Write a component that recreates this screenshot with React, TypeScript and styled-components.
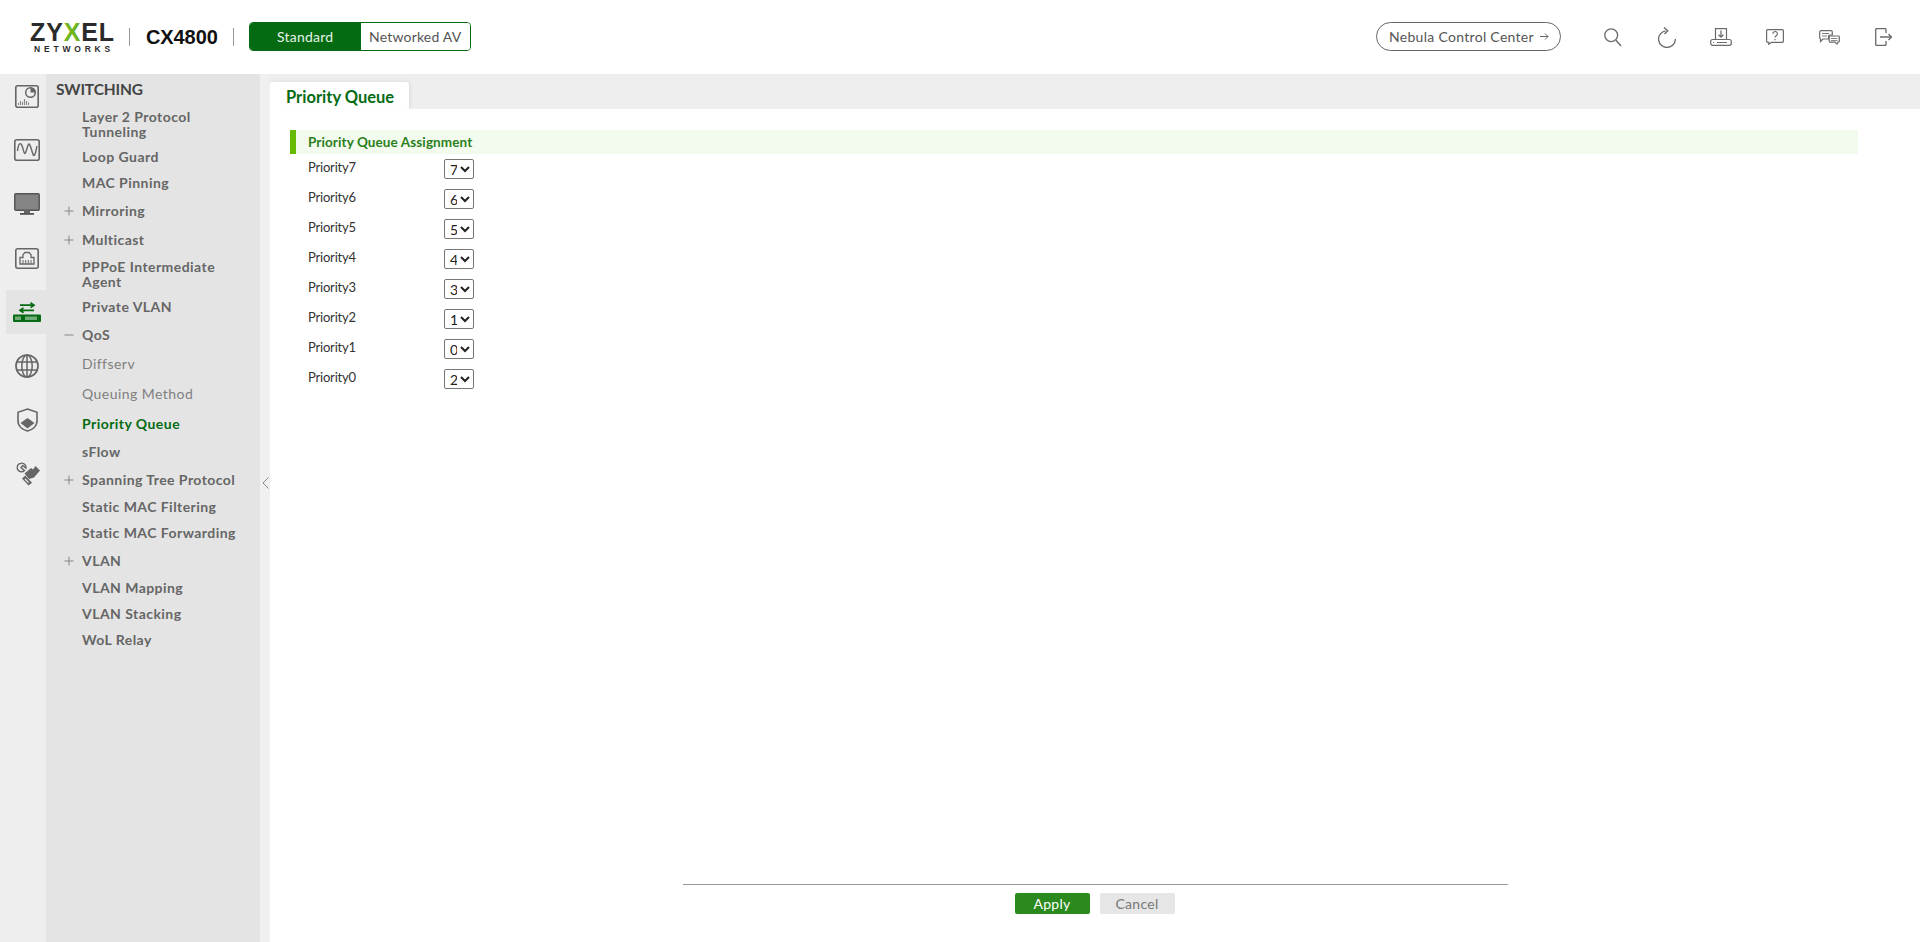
import React from "react";
import styled, { createGlobalStyle } from "styled-components";

const Global = createGlobalStyle`
  html, body { margin: 0; padding: 0; height: 100%; background: #fff; overflow: hidden; }
  #root { height: 100%; }
  * { box-sizing: border-box; }
`;
const FONT = `"Lato", "Liberation Sans", sans-serif`;

const Page = styled.div`
  width: 1920px; height: 942px; display: flex; flex-direction: column;
  font-family: ${FONT}; color: #333;
`;
const Header = styled.header`
  height: 74px; flex: none; display: flex; align-items: center; background: #fff;
  padding: 0 10px 0 31px;
`;
const Logo = styled.div`
  width: 82px; display: flex; flex-direction: column; align-items: center; gap: 2px; color: #2b2b2b;
  font-family: "Liberation Sans", sans-serif;
`;
const LogoMain = styled.div`
  font-size: 25px; line-height: 22px; font-weight: 700; letter-spacing: 0.85px; margin-right: -1px; white-space: nowrap;
  span { color: #6fb51e; }
`;
const LogoSub = styled.div`
  font-size: 8.5px; line-height: 8px; font-weight: 700; letter-spacing: 3.8px; margin-right: -4px;
`;
const Divider = styled.div`
  width: 1px; height: 18px; background: #999; flex: none;
`;
const LogoDivider = styled(Divider)`
  margin-left: 16px;
`;
const Model = styled.div`
  font-family: "Liberation Sans", sans-serif; font-size: 20px; font-weight: 700; color: #111;
  margin: 0 15px 0 16px; letter-spacing: -0.1px;
`;
const Toggle = styled.div`
  display: flex; height: 29px; width: 222px; border: 1px solid #056b12; border-radius: 4px;
  overflow: hidden; margin: 0 0 2px 15px;
`;
const ToggleItem = styled.div<{ $on?: boolean }>`
  display: flex; align-items: center; justify-content: center; font-size: 14px;
  letter-spacing: 0.2px;
  width: ${(p) => (p.$on ? "111px" : "109px")};
  background: ${(p) => (p.$on ? "#056b12" : "#fff")};
  color: ${(p) => (p.$on ? "#e6f3e6" : "#555")};
`;
const HeaderRight = styled.div`
  margin-left: auto; display: flex; align-items: center;
`;
const Nebula = styled.div`
  width: 185px; height: 29px; border: 1px solid #666; border-radius: 15px; display: flex; align-items: center;
  padding-left: 12px; gap: 6px; font-size: 14px; letter-spacing: 0.3px; color: #555; margin: 0 25px 2px 0; white-space: nowrap;
`;
const TopIcon = styled.div`
  width: 54px; height: 30px; display: flex; align-items: center; justify-content: center; color: #6b6b6b;
`;
const Body = styled.div`
  flex: 1; display: flex; min-height: 0;
`;
const Rail = styled.nav`
  width: 46px; flex: none; background: #eeeeef; display: flex; flex-direction: column; gap: 10px;
`;
const RailItem = styled.div<{ $on?: boolean }>`
  width: 40px; margin-left: 6px; padding-left: 2px; height: 44px; flex: none;
  display: flex; align-items: center; justify-content: center;
  background: ${(p) => (p.$on ? "#e4e4e4" : "transparent")};
  color: #666;
`;
const Side = styled.aside`
  width: 214px; flex: none; background: #e4e4e4; padding: 5px 0 0 10px; color: #666;
`;
const SideTitle = styled.div`
  font-size: 15.5px; line-height: 20px; font-weight: 700; color: #444; letter-spacing: -0.15px;
`;
const MenuRow = styled.div<{ $gap: number }>`
  margin-top: ${(p) => p.$gap}px; display: flex; align-items: center; position: relative; padding-left: 26px;
`;
const MenuText = styled.span<{ $kind?: "sub" | "active" }>`
  font-size: 14px; line-height: 15px; letter-spacing: 0.45px;
  font-weight: ${(p) => (p.$kind === "sub" ? 400 : 700)};
  color: ${(p) => (p.$kind === "active" ? "#056b12" : p.$kind === "sub" ? "#808080" : "#666")};
  white-space: pre-line;
`;
const Expander = styled.span`
  position: absolute; left: 8px; top: 50%; transform: translateY(-50%); width: 10px; height: 10px; color: #888;
  display: flex;
`;
const Gutter = styled.div`
  width: 10px; flex: none; background: #f0f0f0; position: relative;
`;
const Collapse = styled.div`
  position: absolute; left: 0; top: 399px; width: 10px; height: 20px; display: flex; align-items: center; justify-content: center; color: #888;
`;
const Main = styled.main`
  flex: 1; min-width: 0; display: flex; flex-direction: column; background: #fff; position: relative;
`;
const TabBar = styled.div`
  height: 35px; flex: none; background: #eeeeee; padding-top: 8px; display: flex;
`;
const Tab = styled.div`
  width: 139px; height: 27px; background: #fff; border-radius: 3px 3px 0 0; box-shadow: 2px -1px 3px rgba(0,0,0,.06);
  font-size: 16.5px; font-weight: 700; color: #056b12; padding-left: 16px; line-height: 30px;
`;
const Content = styled.div`
  flex: 1; display: flex; flex-direction: column; padding: 21px 62px 0 20px;
`;
const Section = styled.div`
  height: 24px; flex: none; background: #f3fbee; border-left: 6px solid #66bb00; padding-left: 12px;
  font-size: 13.5px; line-height: 25px; font-weight: 700; color: #2a8020; letter-spacing: 0.1px;
`;
const Fields = styled.div`
  display: flex; flex-direction: column; padding-left: 18px;
`;
const Field = styled.label`
  height: 30px; flex: none; display: flex; align-items: flex-start;
`;
const FieldLabel = styled.span`
  width: 136px; font-size: 13px; line-height: 16px; color: #333; margin-top: 5px; letter-spacing: -0.2px;
`;
const Select = styled.select`
  width: 30px; height: 20px; margin: 5px 0 0 0; padding: 0 0 0 1px; font-size: 14px; font-family: ${FONT};
  border: 1px solid #767676; border-radius: 2px; background: #fff; color: #222;
`;
const Footer = styled.div`
  position: absolute; left: 413px; top: 810px; width: 825px; border-top: 1px solid #999;
  display: flex; justify-content: center; gap: 10px; padding: 8px 2px 0 0;
`;
const Btn = styled.button<{ $primary?: boolean }>`
  width: 75px; height: 21px; border: 0; border-radius: 2px; padding: 0; font-family: ${FONT}; font-size: 14px;
  background: ${(p) => (p.$primary ? "#2b8a1e" : "#e6e6e6")}; color: ${(p) => (p.$primary ? "#fff" : "#777")};
  letter-spacing: 0.3px;
`;

const Plus = () => (
  <svg width="10" height="10" viewBox="0 0 10 10"><path d="M5 .5v9M.5 5h9" stroke="currentColor" strokeWidth="1" /></svg>
);
const Minus = () => (
  <svg width="10" height="10" viewBox="0 0 10 10"><path d="M.5 5h9" stroke="currentColor" strokeWidth="1" /></svg>
);

const S = { fill: "none", stroke: "currentColor" } as const;
const RailIcons = [
  <svg key="a" width="24" height="23" viewBox="0 0 24 23">
    <rect x=".8" y=".8" width="22.400" height="21.400" rx="2" {...S} strokeWidth="1.6" />
    <circle cx="15.500" cy="7.500" r="4.800" {...S} strokeWidth="1.5" />
    <path d="M15.500 7.500V2.700A4.800 4.800 0 0 1 20.300 7.500Z" fill="currentColor" />
    <path d="M3.500 20v-2M5.500 20v-4M7.500 20v-3M9.500 20v-6M11.500 20v-4M13.500 20v-2.500" {...S} strokeWidth="1.1" opacity=".75" />
  </svg>,
  <svg key="b" width="26" height="22" viewBox="0 0 26 22">
    <rect x=".8" y=".8" width="24.400" height="20.400" rx="2" {...S} strokeWidth="1.6" />
    <path d="M3.500 12C4.500 3 7 3 8.500 8S10.500 18 12.500 11 15 3 17 9 19.500 19 21 15 22.500 8 23 7" {...S} strokeWidth="1.4" />
  </svg>,
  <svg key="c" width="26" height="22" viewBox="0 0 26 22">
    <rect x=".8" y=".8" width="24.400" height="16.400" rx="1" fill="#858585" stroke="#555" strokeWidth="1.500" />
    <rect x="10" y="17" width="6" height="3" fill="#666" />
    <rect x="6" y="20" width="14" height="1.800" fill="#555" />
  </svg>,
  <svg key="d" width="24" height="21" viewBox="0 0 24 21">
    <rect x=".8" y=".8" width="22.400" height="19.400" rx="2" {...S} strokeWidth="1.6" />
    <path d="M5 16V9.500h3V6.500l2-2h4l2 2v3h3V16Z" {...S} strokeWidth="1.3" />
    <path d="M8 15.500v-3.500M10.700 15.500v-3.500M13.300 15.500v-3.500M16 15.500v-3.500" {...S} strokeWidth="1" />
  </svg>,
];
const RailIcons2 = [
  <svg key="e" width="24" height="24" viewBox="0 0 24 24">
    <circle cx="12" cy="12" r="11" {...S} strokeWidth="1.700" />
    <ellipse cx="12" cy="12" rx="5.200" ry="11" {...S} strokeWidth="1.500" />
    <path d="M12 1v22M1.800 8h20.400M1.800 16h20.400" {...S} strokeWidth="1.500" />
  </svg>,
  <svg key="f" width="21" height="24" viewBox="0 0 21 24">
    <path d="M10.500 1 L20 4.200 V13 C20 18.500 15 21.800 10.500 23 C6 21.800 1 18.500 1 13 V4.200 Z" {...S} strokeWidth="1.600" />
    <path d="M3.500 15 L10.500 10 L17.500 15 L10.500 20.500Z" fill="currentColor" />
  </svg>,
  <svg key="g" width="25" height="24" viewBox="0 0 25 24">
    <path d="M6 1.200A4.300 4.300 0 1 0 9.500 8.500L6 5.600 7.700 3.500l3.300 2.800A4.300 4.300 0 0 0 6 1.200Z" {...S} strokeWidth="1.400" />
    <path d="M9.500 11.500 L16 6 L18 7.500 L20.500 4 L25 8.500 L19 15.500 L14 17Z" fill="currentColor" />
    <path d="M7 16.500 L13.500 23.500 L17 20.800 L10.200 13.500Z" fill="currentColor" />
    <path d="M10 17l3.500 3.500" stroke="#eeeeef" strokeWidth="1.100" />
  </svg>,
];

const menu: { t: string; gap: number; e?: "+" | "-"; k?: "sub" | "active" }[] = [
  { t: "Layer 2 Protocol\nTunneling", gap: 10 },
  { t: "Loop Guard", gap: 10 },
  { t: "MAC Pinning", gap: 11 },
  { t: "Mirroring", gap: 13, e: "+" },
  { t: "Multicast", gap: 14, e: "+" },
  { t: "PPPoE Intermediate\nAgent", gap: 12 },
  { t: "Private VLAN", gap: 10 },
  { t: "QoS", gap: 13, e: "-" },
  { t: "Diffserv", gap: 14, k: "sub" },
  { t: "Queuing Method", gap: 15, k: "sub" },
  { t: "Priority Queue", gap: 15, k: "active" },
  { t: "sFlow", gap: 13 },
  { t: "Spanning Tree Protocol", gap: 13, e: "+" },
  { t: "Static MAC Filtering", gap: 12 },
  { t: "Static MAC Forwarding", gap: 11 },
  { t: "VLAN", gap: 13, e: "+" },
  { t: "VLAN Mapping", gap: 12 },
  { t: "VLAN Stacking", gap: 11 },
  { t: "WoL Relay", gap: 11 },
];

const prios: [string, string][] = [["7","7"],["6","6"],["5","5"],["4","4"],["3","3"],["2","1"],["1","0"],["0","2"]];

export default function App() {
  return (
    <Page>
      <Global />
      <Header>
        <Logo>
          <LogoMain>ZY<span>X</span>EL</LogoMain>
          <LogoSub>NETWORKS</LogoSub>
        </Logo>
        <LogoDivider />
        <Model>CX4800</Model>
        <Divider />
        <Toggle>
          <ToggleItem $on>Standard</ToggleItem>
          <ToggleItem>Networked AV</ToggleItem>
        </Toggle>
        <HeaderRight>
          <Nebula>
            Nebula Control Center
            <svg width="9" height="9" viewBox="0 0 9 9"><path d="M0 4.500h8M5 1.500l3 3-3 3" fill="none" stroke="currentColor" strokeWidth=".9" /></svg>
          </Nebula>
          <TopIcon>
            <svg width="18" height="19" viewBox="0 0 18 19"><circle cx="7.200" cy="7.200" r="6.400" {...S} strokeWidth="1.300" /><path d="M12 12.300 17 18" {...S} strokeWidth="1.400" /></svg>
          </TopIcon>
          <TopIcon>
            <svg width="18" height="21" viewBox="0 0 18 21"><path d="M17.400 12A8.400 8.400 0 1 1 7.500 3.800" {...S} strokeWidth="1.300" /><path d="M6 .5 9.800 3.700 6.500 7" {...S} strokeWidth="1.400" /></svg>
          </TopIcon>
          <TopIcon>
            <svg width="22" height="18" viewBox="0 0 22 18"><path d="M5.500 11.500V.7h11v10.800" {...S} strokeWidth="1.200" /><path d="M11 2.500v6.500M8.500 6.700 11 9.200l2.500-2.500" {...S} strokeWidth="1.300" /><rect x=".7" y="11.500" width="20.600" height="5.800" rx="2" {...S} strokeWidth="1.200" /><path d="M7 14.500h10M3 14.500h1" {...S} strokeWidth="1.200" /></svg>
          </TopIcon>
          <TopIcon>
            <svg width="18" height="16" viewBox="0 0 18 16"><path d="M1.600.7h14.800a1 1 0 0 1 1 1v10.600a1 1 0 0 1-1 1H5.500L2.800 15.300v-2H1.600a1 1 0 0 1-1-1V1.700a1 1 0 0 1 1-1Z" {...S} strokeWidth="1.200" /><path d="M6.800 4.800a2.300 2.300 0 1 1 3.300 2.100c-.8.400-1.100.8-1.100 1.700M9 10v1.200" {...S} strokeWidth="1.200" /></svg>
          </TopIcon>
          <TopIcon>
            <svg width="21" height="15" viewBox="0 0 21 15"><path d="M2 .7h10a1.300 1.300 0 0 1 1.300 1.300v3H11a1.500 1.500 0 0 0-1.500 1.500V9H4l-2.500 2.500V9A1.300 1.300 0 0 1 .7 7.700V2A1.300 1.300 0 0 1 2 .7Z" {...S} strokeWidth="1.200" /><path d="M3 3.500h7M3 6h5" {...S} strokeWidth=".9" /><path d="M11 6h8.500a.8.800 0 0 1 .8.800v4.500a.8.800 0 0 1-.8.800H19l-1 2-2-2h-5a.8.800 0 0 1-.8-.800V6.800A.8.800 0 0 1 11 6Z" {...S} strokeWidth="1.200" /><path d="M12 8.500h6.500M12 10.500h6.500" {...S} strokeWidth=".8" /></svg>
          </TopIcon>
          <TopIcon>
            <svg width="17" height="18" viewBox="0 0 17 18"><path d="M11 5V1.500a1 1 0 0 0-1-1H1.700a1 1 0 0 0-1 1v15a1 1 0 0 0 1 1H10a1 1 0 0 0 1-1V13" {...S} strokeWidth="1.300" /><path d="M5 9h11M13.500 6l3 3-3 3" {...S} strokeWidth="1.400" /></svg>
          </TopIcon>
        </HeaderRight>
      </Header>
      <Body>
        <Rail>
          {RailIcons.map((i) => <RailItem key={i.key}>{i}</RailItem>)}
          <RailItem $on>
            <svg width="28" height="20" viewBox="0 0 28 20">
              <path d="M7 3.200h14M17.500.8 21 3.200 17.500 5.600M21 8.300H7M10.500 5.900 7 8.300l3.500 2.400" fill="none" stroke="#056b12" strokeWidth="1.700" />
              <rect x="0" y="12.500" width="28" height="7.500" rx="1" fill="#056b12" />
              <path d="M3 14.500v3.500M5 14.500v3.500M7 14.500v3.500M13 14.500v3.500M15 14.500v3.500M17 14.500v3.500M19 14.500v3.500M21 14.500v3.500M23 14.500v3.500" stroke="#dff0df" strokeWidth="1" />
            </svg>
          </RailItem>
          {RailIcons2.map((i) => <RailItem key={i.key}>{i}</RailItem>)}
        </Rail>
        <Side>
          <SideTitle>SWITCHING</SideTitle>
          {menu.map((m) => (
            <MenuRow key={m.t} $gap={m.gap}>
              {m.e && <Expander>{m.e === "+" ? <Plus /> : <Minus />}</Expander>}
              <MenuText $kind={m.k}>{m.t}</MenuText>
            </MenuRow>
          ))}
        </Side>
        <Gutter>
          <Collapse>
            <svg width="7" height="12" viewBox="0 0 7 12"><path d="M6.500.5 1 6l5.500 5.500" fill="none" stroke="currentColor" strokeWidth="1" /></svg>
          </Collapse>
        </Gutter>
        <Main>
          <TabBar><Tab>Priority Queue</Tab></TabBar>
          <Content>
            <Section>Priority Queue Assignment</Section>
            <Fields>
              {prios.map(([p, v]) => (
                <Field key={p}>
                  <FieldLabel>Priority{p}</FieldLabel>
                  <Select defaultValue={v}>
                    {["0","1","2","3","4","5","6","7"].map((o) => <option key={o}>{o}</option>)}
                  </Select>
                </Field>
              ))}
            </Fields>
          </Content>
          <Footer>
            <Btn $primary>Apply</Btn>
            <Btn>Cancel</Btn>
          </Footer>
        </Main>
      </Body>
    </Page>
  );
}
